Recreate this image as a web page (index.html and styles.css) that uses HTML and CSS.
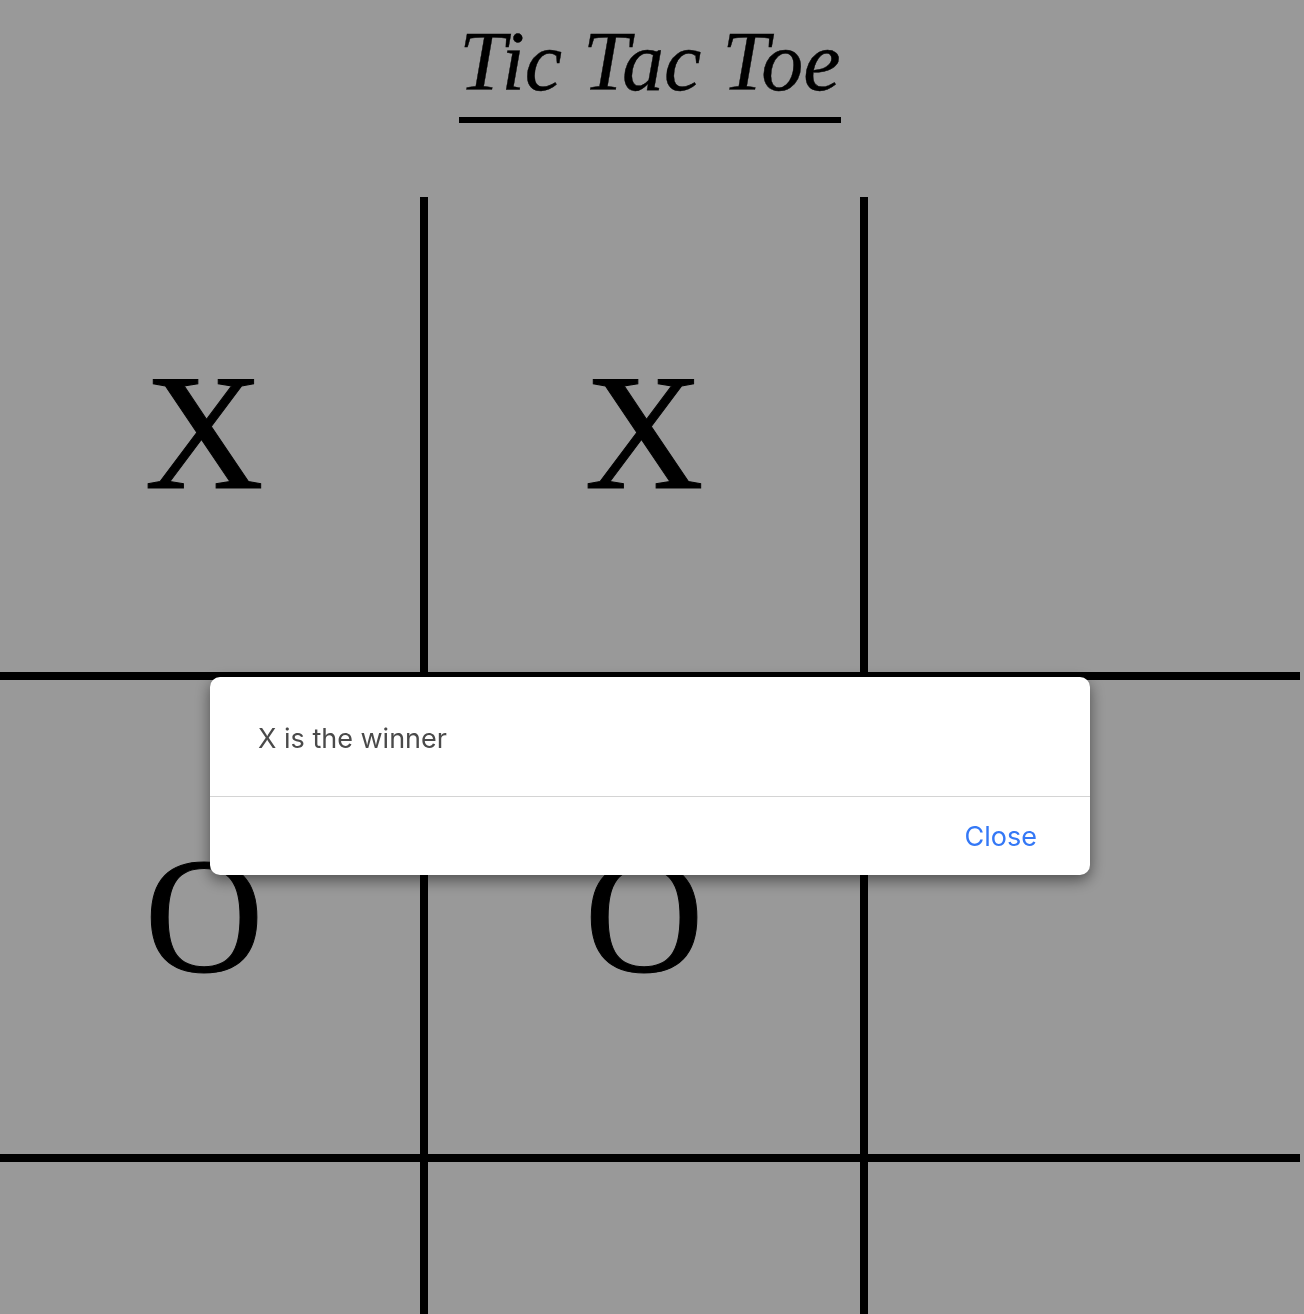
FILE: index.html
```html
<!DOCTYPE html>
<html lang="en">
<head>
<meta charset="utf-8">
<title>Tic Tac Toe</title>
<link rel="stylesheet" href="styles.css">
</head>
<body>
<main class="page">
  <header class="header">
    <h1 class="title">Tic Tac Toe</h1>
  </header>
  <div class="board">
    <div class="cell">X</div>
    <div class="cell">X</div>
    <div class="cell"></div>
    <div class="cell">O</div>
    <div class="cell">O</div>
    <div class="cell"></div>
    <div class="cell"></div>
    <div class="cell"></div>
    <div class="cell"></div>
  </div>
</main>
<div class="overlay">
  <div class="modal">
    <div class="modal-body">X is the winner</div>
    <div class="modal-footer"><button class="close-btn" type="button">Close</button></div>
  </div>
</div>
</body>
</html>
```
FILE: styles.css
```css
html, body {
  margin: 0;
  padding: 0;
  background: #ffffff;
  overflow: hidden;
  height: 1314px;
}
body {
  font-family: "Liberation Serif", "Times New Roman", serif;
  color: #000;
}
.page {
  width: 1300px;
}
.header {
  text-align: center;
  padding-top: 20px;
}
.title {
  display: inline-block;
  margin: 0;
  font-size: 84px;
  line-height: 84px;
  font-style: italic;
  font-weight: normal;
  padding-bottom: 13px;
  border-bottom: 6px solid #000;
  -webkit-text-stroke: 0.4px #000;
}
.board {
  margin-top: 74px;
  margin-left: -12px;
  width: 1312px;
  display: grid;
  grid-template-columns: 440px 440px 432px;
  grid-template-rows: 483px 482px 200px;
}
.cell {
  display: flex;
  align-items: center;
  justify-content: center;
  font-size: 165px;
  line-height: 1;
  padding-bottom: 4px;
  -webkit-text-stroke: 1px #000;
}
.cell:nth-child(3n+1),
.cell:nth-child(3n+2) {
  border-right: 8px solid #000;
}
.cell:nth-child(-n+6) {
  border-bottom: 8px solid #000;
}
.overlay {
  position: fixed;
  inset: 0;
  background: rgba(0, 0, 0, 0.4);
  display: flex;
  justify-content: center;
  align-items: flex-start;
  padding-top: 677px;
  padding-right: 4px;
}
.modal {
  width: 880px;
  background: #fff;
  border-radius: 10px;
  box-shadow: 0 5px 15px rgba(0, 0, 0, 0.5);
  font-family: Inter, "Noto Sans", sans-serif;
}
.modal-body {
  height: 120px;
  box-sizing: border-box;
  display: flex;
  align-items: center;
  padding: 3px 48px 0;
  font-size: 27px;
  color: #4a4a4a;
  border-bottom: 1px solid #d4d4d4;
}
.modal-footer {
  height: 78px;
  display: flex;
  align-items: center;
  justify-content: flex-end;
  padding: 0 53px;
}
.close-btn {
  border: 0;
  background: none;
  padding: 0;
  font-family: inherit;
  font-size: 27px;
  color: #3478f6;
  cursor: pointer;
}
```
